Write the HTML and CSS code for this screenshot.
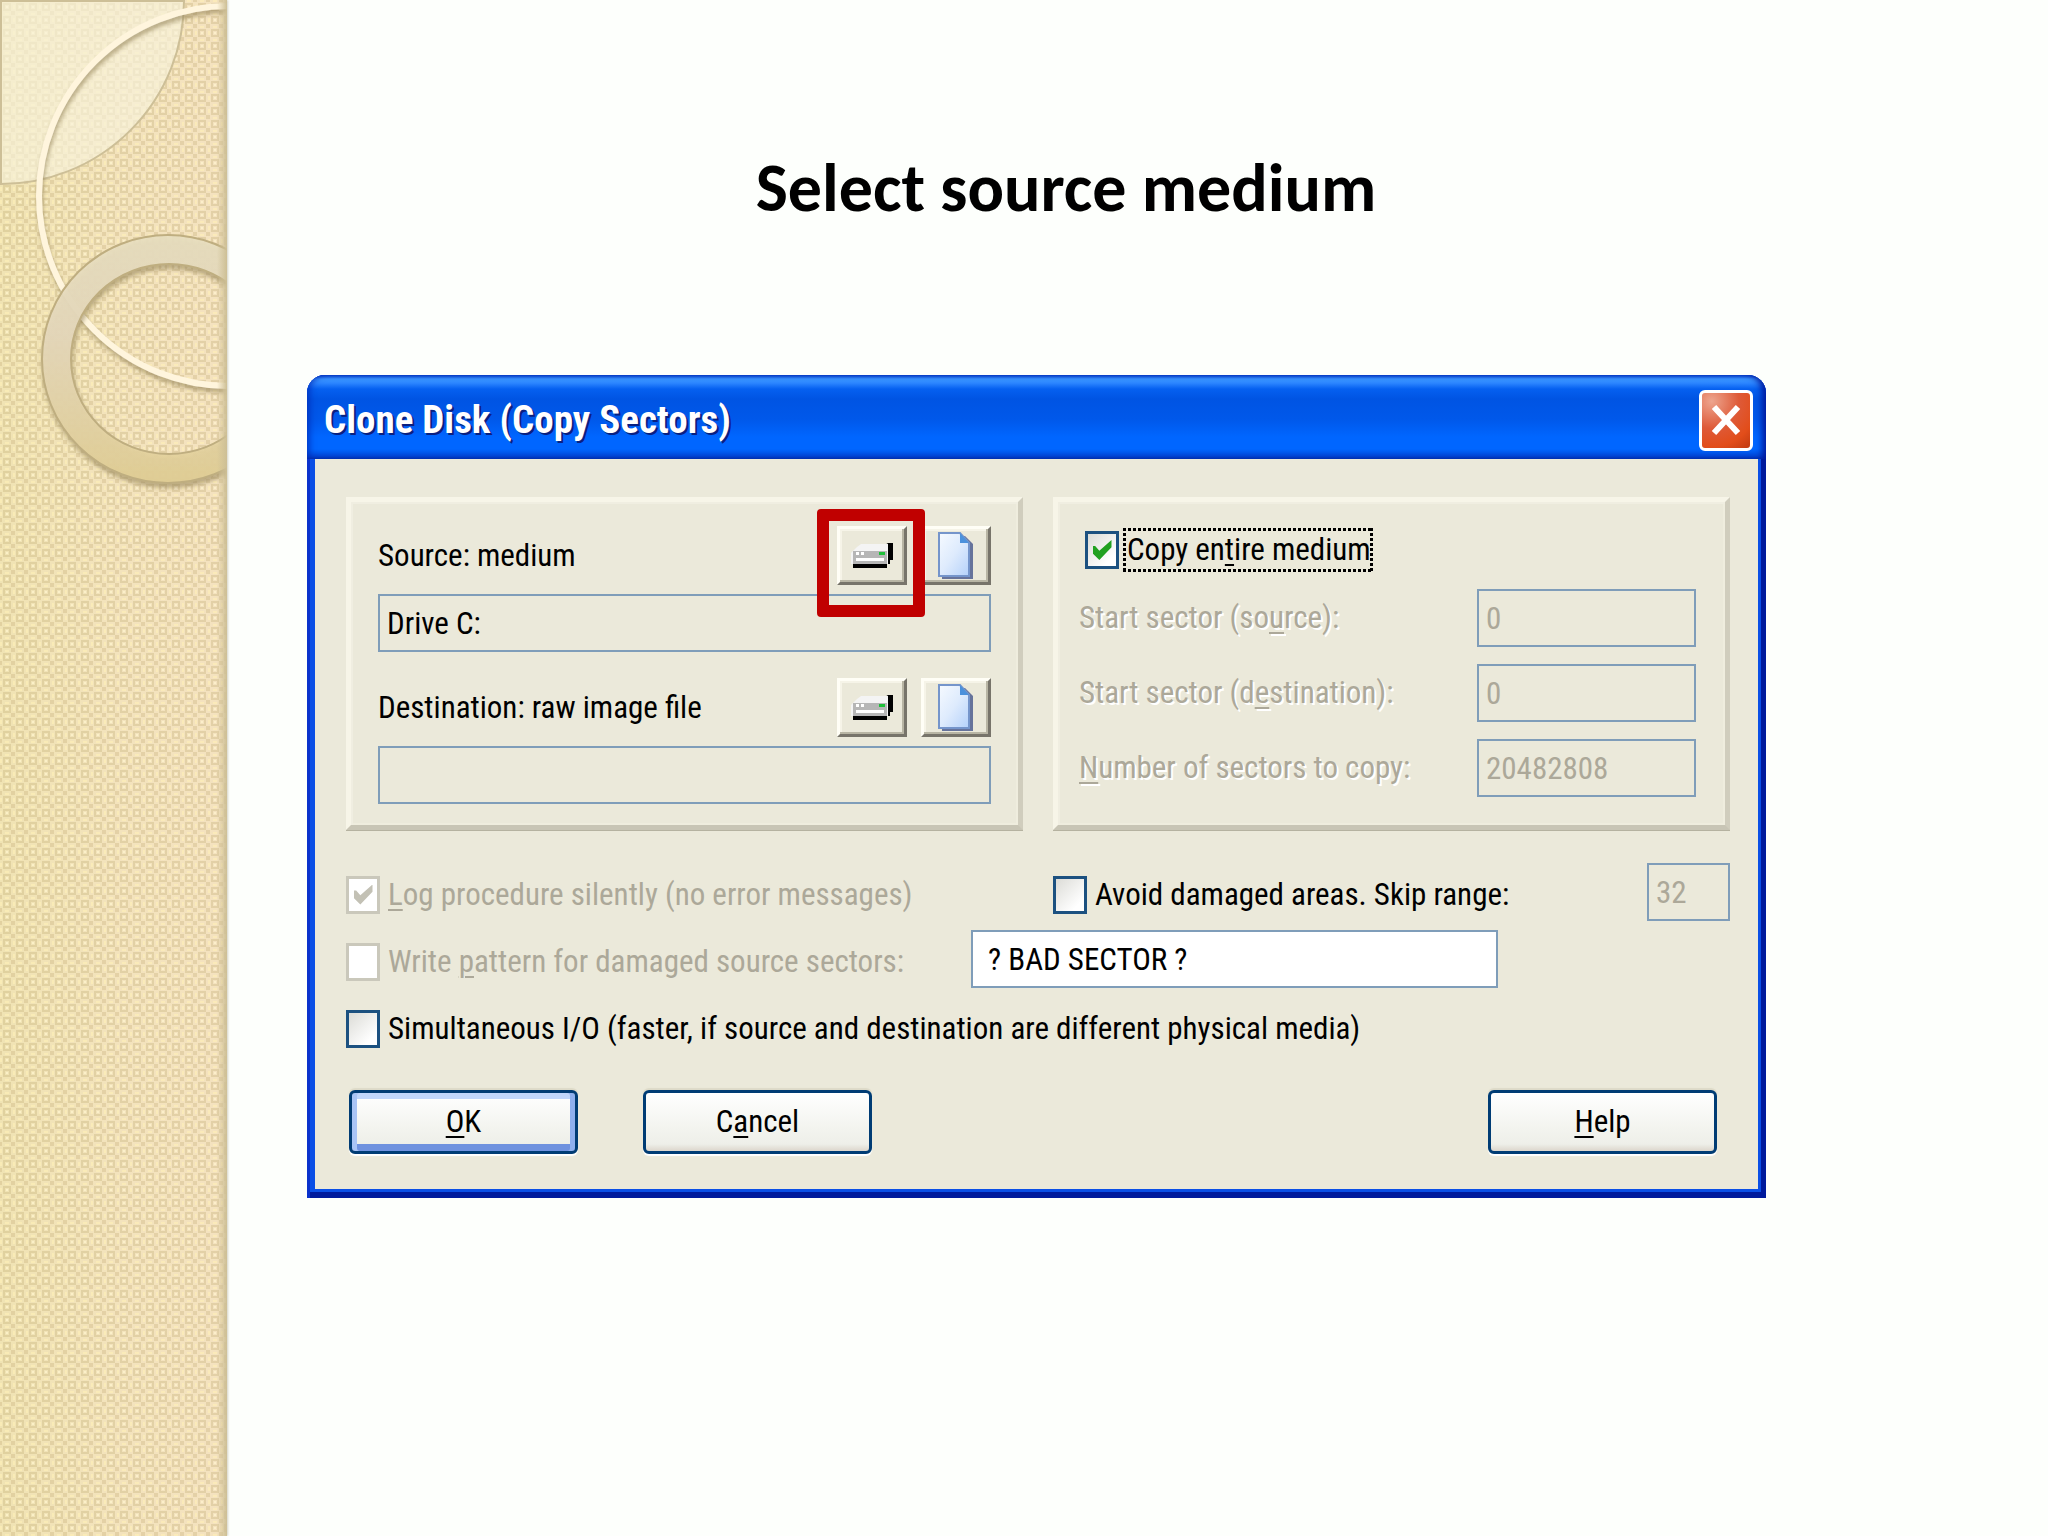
FILE: index.html
```
<!DOCTYPE html>
<html lang="en">
  <head>
    <meta charset="utf-8" />
    <title>Select source medium</title>
    <link rel="stylesheet" href="styles.css">
  </head>
  <body>
    <aside class="sidebar">
      <svg class="artwork" aria-hidden="true">
        <defs>
          <pattern id="weave" width="13" height="13" patternUnits="userSpaceOnUse">
            <rect x="4" y="4" width="6" height="6" fill="none" stroke="#c0ab74" stroke-width="2" stroke-opacity=".32" />
            <rect x="6" y="6" width="2" height="2" fill="#fff6cf" fill-opacity=".7" />
            <path d="M0 0h2v2h-2zM11 0h2v2h-2zM0 11h2v2h-2zM11 11h2v2h-2z" fill="#c0ab74" fill-opacity=".3" />
            <path d="M5 0h4v2h-4zM0 5h2v4h-2z" fill="#fff0b8" fill-opacity=".6" />
          </pattern>
          <linearGradient id="ringFill" x1="0" y1="0" x2="0" y2="1">
            <stop offset="0" stop-color="#e8dfc0" />
            <stop offset=".4" stop-color="#e6d9bd" />
            <stop offset="1" stop-color="#e2cf95" />
          </linearGradient>
          <filter id="shadow" x="-10%" y="-10%" width="120%" height="120%">
            <feDropShadow dx="1" dy="4" stdDeviation="2" flood-color="#8f7f52" flood-opacity=".6" />
          </filter>
        </defs>
        <rect width="100%" height="100%" fill="url(#weave)" />
        <path d="M1 1H184A183 183 0 0 1 1 184Z" fill="#f8f3dc" fill-opacity=".65" stroke="#cdbf97" stroke-width="2" />
        <circle cx="229" cy="196" r="190" fill="none" stroke="#fff5dd" stroke-width="6" filter="url(#shadow)" />
        <path
          d="M42 359a126 124 0 1 0 252 0a126 124 0 1 0-252 0zM71 359a98 95 0 1 1 196 0a98 95 0 1 1-196 0z"
          fill="url(#ringFill)"
          fill-opacity=".9"
          fill-rule="evenodd"
          stroke="#bfae80"
          stroke-width="2"
          filter="url(#shadow)"
        />
      </svg>
    </aside>

    <main class="slide">
      <h1 class="slide-title">Select source medium</h1>

      <form class="dialog">
        <header class="titlebar">
          <h2 class="caption">Clone Disk (Copy Sectors)</h2>
          <button type="button" class="close" aria-label="Close">
            <svg width="30" height="34" viewBox="0 0 30 34">
              <path d="M3 4L27 30M27 4L3 30" stroke="#fff" stroke-width="6" />
            </svg>
          </button>
        </header>

        <div class="content">
          <div class="columns">
            <section class="group">
              <div class="medium-row">
                <label for="source">Source: medium</label>
                <div class="highlight">
                  <button type="button" class="tool" aria-label="Source disk">
                    <svg width="42" height="25" viewBox="0 0 42 25">
                      <path d="M37 0h5v17h-3v4h-3v4H2v-4z" fill="#000" />
                      <path d="M6 4L10 1H37V21H0V10z" fill="#f4f4f4" />
                      <path d="M2 8h34v13H2z" fill="#b6b6b6" />
                      <path d="M5 15h28v3H5z" fill="#fff" />
                      <path d="M5 9h3v3H5zM10 9h3v3h-3z" fill="#fff" />
                      <path d="M28 9h6v3h-6z" fill="#1fbf3a" />
                    </svg>
                  </button>
                </div>
                <button type="button" class="tool" aria-label="Source file">
                  <svg width="36" height="48" viewBox="0 0 36 48">
                    <path d="M4 4H27L35 12V47H4z" fill="#66739b" />
                    <path d="M1 1H22L31 11V44H1z" fill="url(#paper)" stroke="#7595cb" stroke-width="2" />
                    <path d="M22 1L31 11H22z" fill="#4b91dc" />
                  </svg>
                </button>
              </div>
              <input class="field" id="source" type="text" value="Drive C:" readonly />
              <div class="medium-row second">
                <label for="destination">Destination: raw image file</label>
                <button type="button" class="tool" aria-label="Destination disk">
                  <svg width="42" height="25" viewBox="0 0 42 25">
                    <path d="M37 0h5v17h-3v4h-3v4H2v-4z" fill="#000" />
                    <path d="M6 4L10 1H37V21H0V10z" fill="#f4f4f4" />
                    <path d="M2 8h34v13H2z" fill="#b6b6b6" />
                    <path d="M5 15h28v3H5z" fill="#fff" />
                    <path d="M5 9h3v3H5zM10 9h3v3h-3z" fill="#fff" />
                    <path d="M28 9h6v3h-6z" fill="#1fbf3a" />
                  </svg>
                </button>
                <button type="button" class="tool" aria-label="Destination file">
                  <svg width="36" height="48" viewBox="0 0 36 48">
                    <defs>
                      <linearGradient id="paper" x1="0" y1="0" x2="1" y2="1">
                        <stop offset="0" stop-color="#f6faff" />
                        <stop offset=".5" stop-color="#deebfd" />
                        <stop offset="1" stop-color="#b4d1fa" />
                      </linearGradient>
                    </defs>
                    <path d="M4 4H27L35 12V47H4z" fill="#66739b" />
                    <path d="M1 1H22L31 11V44H1z" fill="url(#paper)" stroke="#7595cb" stroke-width="2" />
                    <path d="M22 1L31 11H22z" fill="#4b91dc" />
                  </svg>
                </button>
              </div>
              <input class="field" id="destination" type="text" readonly />
            </section>

            <section class="group sectors">
              <div class="check entire">
                <input type="checkbox" id="entire" checked />
                <label for="entire" class="focused">Copy en<u>t</u>ire medium</label>
              </div>
              <div class="sector-row">
                <label for="start-source">Start sector (so<u>u</u>rce):</label>
                <input class="field" id="start-source" type="text" value="0" disabled />
              </div>
              <div class="sector-row">
                <label for="start-destination">Start sector (d<u>e</u>stination):</label>
                <input class="field" id="start-destination" type="text" value="0" disabled />
              </div>
              <div class="sector-row">
                <label for="count"><u>N</u>umber of sectors to copy:</label>
                <input class="field" id="count" type="text" value="20482808" disabled />
              </div>
            </section>
          </div>

          <div class="options">
            <div class="columns">
              <div class="check">
                <input type="checkbox" id="log" checked disabled />
                <label for="log"><u>L</u>og procedure silently (no error messages)</label>
              </div>
              <div class="skip-row">
                <div class="check">
                  <input type="checkbox" id="avoid" />
                  <label for="avoid">Avoid damaged areas. Skip range:</label>
                </div>
                <input class="field range" type="text" value="32" aria-label="Skip range" disabled />
              </div>
            </div>
            <div class="pattern-row">
              <div class="check">
                <input type="checkbox" id="write" disabled />
                <label for="write">Write <u>p</u>attern for damaged source sectors:</label>
              </div>
              <input class="field pattern" type="text" value="? BAD SECTOR ?" aria-label="Pattern" />
            </div>
            <div class="check">
              <input type="checkbox" id="simultaneous" />
              <label for="simultaneous">Simultaneous I/O (faster, if source and destination are different physical media)</label>
            </div>
          </div>

          <div class="actions">
            <button type="button" class="button button-default"><u>O</u>K</button>
            <button type="button" class="button">C<u>a</u>ncel</button>
            <button type="button" class="button button-help"><u>H</u>elp</button>
          </div>
        </div>
      </form>
    </main>
  </body>
</html>
```
FILE: styles.css
```
:root {
  --face: #ebe9da;
  --text: #000;
  --text-disabled: #aca899;
  --field-border: #7f9db9;
  --check-border: #1c5180;
  --ui-font: "Roboto Condensed", Roboto, "Liberation Sans", sans-serif;
}

*,
*::before,
*::after {
  box-sizing: border-box;
}

body {
  margin: 0;
  min-height: 100vh;
  display: flex;
  background-color: #fdfffc;
  color: var(--text);
  font: 31px/36px var(--ui-font);
}

input,
button {
  font: inherit;
  color: inherit;
}

u {
  text-decoration-thickness: 2px;
  text-underline-offset: 4px;
}

/* Decorated strip on the left */

.sidebar {
  position: relative;
  flex: 0 0 227px;
  background: linear-gradient(90deg, #f0e3b3, #f3e3bc 50%, #f4e2bf);
  box-shadow: 1px 0 2px rgba(150, 140, 110, 0.4);
}

.sidebar::after {
  content: "";
  position: absolute;
  inset: 0 0 0 auto;
  width: 10px;
  background: linear-gradient(90deg, rgba(200, 184, 140, 0), #cdbf95);
}

.artwork {
  position: absolute;
  inset: 0;
  width: 100%;
  height: 100%;
}

/* Slide */

.slide {
  flex: 1;
  padding: 148px 223px 0 80px;
}

.slide-title {
  margin: 0;
  font: bold 68px/80px Carlito, Lato, sans-serif;
  text-align: center;
}

.dialog {
  margin: 147px 59px 0 0;
  padding: 0 8px 9px;
  border-radius: 18px 18px 0 0;
  background-color: #0a4fe6;
  box-shadow: inset 3px 0 #0a32cc, inset -5px -6px #001a9c;
}

.titlebar {
  display: flex;
  align-items: center;
  justify-content: space-between;
  height: 84px;
  margin: 0 -8px;
  padding: 6px 13px 0 17px;
  border-radius: 18px 18px 0 0;
  background: linear-gradient(
    #0a4bd6 0,
    #3a95ff 4px,
    #2c86ff 8px,
    #0560f0 14px,
    #0054e3 24px,
    #0058ea 44px,
    #0066ff 62px,
    #0066ff 74px,
    #0048d8 81px,
    #0038b8 84px
  );
  box-shadow: inset 5px 0 6px -2px rgba(0, 40, 180, 0.7),
    inset -6px 0 6px -2px rgba(0, 20, 150, 0.9);
}

.caption {
  margin: 0;
  font: bold 39px/44px var(--ui-font);
  color: #fff;
  text-shadow: 2px 2px #0a2080;
}

.close {
  display: flex;
  align-items: center;
  justify-content: center;
  width: 54px;
  height: 61px;
  padding: 0;
  border: 3px solid #fff;
  border-radius: 6px;
  background: radial-gradient(circle at 20% 15%, #eda58f, #de5a38 45%, #e24d1a 75%, #c03a10);
}

.content {
  padding: 38px 28px 35px 31px;
  background-color: var(--face);
}

.columns {
  display: grid;
  grid-template-columns: 1fr 1fr;
  column-gap: 30px;
}

.group {
  padding: 24px 27px 21px;
  border: 5px solid;
  border-color: #f7f5e8 #d0cdbd #c8c5b5 #f7f5e8;
  box-shadow: inset 2px 2px #f0eee1, inset -2px -2px #efedde, 0 1px #b5b2a0;
}

.medium-row {
  display: flex;
  align-items: center;
  gap: 14px;
  margin-bottom: 9px;
}

.medium-row label {
  flex: 1;
}

.second {
  margin-top: 26px;
}

.tool {
  display: flex;
  align-items: center;
  justify-content: center;
  width: 70px;
  height: 59px;
  padding: 0;
  border: 3px solid;
  border-color: #fffef6 #77746a #77746a #fffef6;
  background-color: var(--face);
  box-shadow: inset -2px -2px #b8b5a4, inset 2px 2px #f6f4e8;
}

.highlight {
  position: relative;
}

/* Red marker drawn over the neighbouring controls */
.highlight::after {
  content: "";
  position: absolute;
  z-index: 1;
  left: -20px;
  top: -17px;
  width: 108px;
  height: 108px;
  border: 12px solid #c00000;
  border-radius: 4px;
}

.field {
  display: block;
  width: 100%;
  height: 58px;
  padding: 0 7px;
  border: 2px solid var(--field-border);
  border-radius: 0;
  outline: none;
  background-color: transparent;
}

.field:disabled {
  color: var(--text-disabled);
}

.sectors {
  padding: 26px 29px 21px 21px;
}

.entire {
  height: 44px;
  margin: 0 0 17px 6px;
}

.sector-row {
  display: flex;
  align-items: center;
  justify-content: space-between;
  margin-bottom: 17px;
  color: var(--text-disabled);
  text-shadow: 2px 2px #fff;
}

.sector-row:last-child {
  margin-bottom: 0;
}

.sector-row .field {
  width: 219px;
  text-shadow: none;
}

/* Tick boxes */

.check {
  display: flex;
  align-items: center;
  gap: 8px;
}

.check input {
  appearance: none;
  display: grid;
  place-items: center;
  flex: none;
  width: 34px;
  height: 38px;
  margin: 0;
  border: 3px solid var(--check-border);
  background: linear-gradient(135deg, #dcdcd7, #fff 80%);
}

.check input:checked::before {
  content: "";
  width: 19px;
  height: 20px;
  background-color: #21a121;
  clip-path: polygon(0 30%, 14% 30%, 36% 54%, 100% 0, 100% 36%, 36% 100%, 0 66%);
}

.check input:disabled {
  border-color: #cac8bb;
  background: #fff;
}

.check input:disabled::before {
  background-color: #c3c1b5;
}

.check input:disabled + label {
  color: var(--text-disabled);
}

.check .focused {
  --dots: #000 0 3px, transparent 3px 5px;
  margin-left: -4px;
  padding: 4px 2px 4px 4px;
  background: repeating-linear-gradient(90deg, var(--dots)) top / 100% 3px no-repeat,
    repeating-linear-gradient(90deg, var(--dots)) bottom / 100% 3px no-repeat,
    repeating-linear-gradient(var(--dots)) left / 3px 100% no-repeat,
    repeating-linear-gradient(var(--dots)) right / 3px 100% no-repeat;
}

.options {
  display: grid;
  grid-auto-rows: 58px;
  row-gap: 9px;
  margin-top: 33px;
}

.options .check {
  padding-top: 5px;
}

.skip-row {
  display: flex;
  justify-content: space-between;
}

.range {
  width: 83px;
}

.pattern-row {
  display: grid;
  grid-template-columns: 625fr 527fr 232fr;
}

.pattern {
  padding: 0 15px;
  background-color: #fff;
}

/* Buttons */

.actions {
  display: flex;
  gap: 65px;
  margin-top: 35px;
  padding: 0 13px 0 3px;
}

.button {
  width: 229px;
  height: 64px;
  padding: 0;
  border: 3px solid #003c74;
  border-radius: 6px;
  background: linear-gradient(#fff, #f3f4ef 60%, #eeefe9 88%, #dcd6cc);
  box-shadow: 0 2px 1px #fff, 0 -2px 1px #dddac8;
}

.button-default {
  box-shadow: inset 5px 0 #a9c4f5, inset -5px 0 #8fb0ee, inset 0 6px #c0d6fb,
    inset 0 -7px #6f92df, 0 2px 1px #fff, 0 -2px 1px #dddac8;
}

.button-help {
  margin-left: auto;
}
```
